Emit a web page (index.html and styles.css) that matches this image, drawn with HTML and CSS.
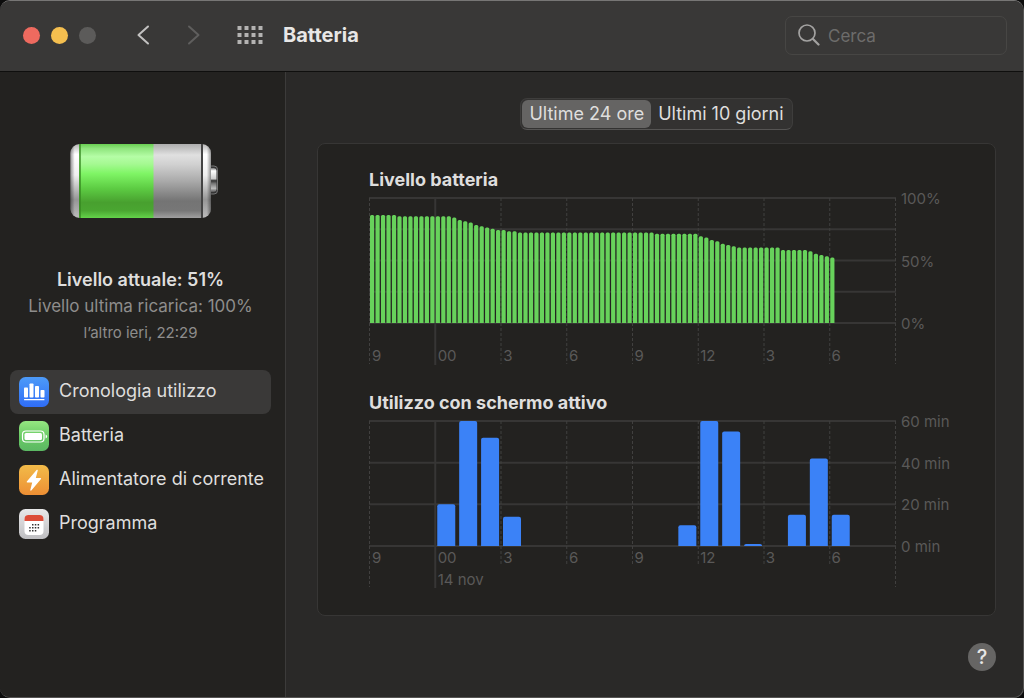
FILE: index.html
```html
<!DOCTYPE html>
<html lang="it">
<head>
<meta charset="utf-8">
<meta name="viewport" content="width=device-width, initial-scale=1">
<title>Batteria</title>
<link rel="stylesheet" href="styles.css">
</head>
<body>
<div class="window">
  <header class="toolbar">
    <div class="lights">
      <button class="light light-close" aria-label="Chiudi"></button>
      <button class="light light-min" aria-label="Riduci"></button>
      <button class="light light-zoom" aria-label="Ingrandisci" disabled></button>
    </div>
    <div class="history">
      <button class="icon-button" aria-label="Indietro">
        <svg width="14" height="22" viewBox="0 0 14 22"><path d="M12 2.500 2.500 11 12 19.500" fill="none" stroke="#c2c1c0" stroke-width="2" stroke-linecap="round" stroke-linejoin="round"/></svg>
      </button>
      <button class="icon-button" aria-label="Avanti" disabled>
        <svg width="14" height="22" viewBox="0 0 14 22"><path d="M2 2.500 11.500 11 2 19.500" fill="none" stroke="#5f5e5d" stroke-width="2" stroke-linecap="round" stroke-linejoin="round"/></svg>
      </button>
    </div>
    <button class="icon-button" aria-label="Mostra tutte">
      <svg width="26" height="18" viewBox="0 0 26 18"><path d="M0.500 2H25.500M0.500 9H25.500M0.500 16H25.500" fill="none" stroke="#b4b3b2" stroke-width="4" stroke-dasharray="4 3"/></svg>
    </button>
    <h1 class="title">Batteria</h1>
    <label class="search">
      <svg width="22" height="22" viewBox="0 0 22 22"><g fill="none" stroke="#a3a2a1" stroke-linecap="round"><circle cx="9" cy="9" r="8" stroke-width="1.700"/><path d="m15 15 5.500 5.500" stroke-width="2.200"/></g></svg>
      <input class="search-input" type="search" placeholder="Cerca" aria-label="Cerca">
    </label>
  </header>

  <div class="body">
    <aside class="sidebar">
      <svg class="battery" width="152" height="80" viewBox="0 0 152 80" role="img" aria-label="Batteria al 51%">
        <defs>
          <linearGradient id="shell" x1="0" y1="0" x2="0" y2="1"><stop offset="0" stop-color="#b5b5b5"/><stop offset=".14" stop-color="#fff"/><stop offset=".42" stop-color="#f0f0f0"/><stop offset=".75" stop-color="#969696"/><stop offset="1" stop-color="#bcbcbc"/></linearGradient>
          <linearGradient id="side" x1="0" y1="0" x2="1" y2="0"><stop offset="0" stop-color="#000" stop-opacity=".4"/><stop offset=".03" stop-color="#000" stop-opacity="0"/><stop offset=".97" stop-color="#000" stop-opacity="0"/><stop offset="1" stop-color="#000" stop-opacity=".4"/></linearGradient>
          <linearGradient id="charge" x1="0" y1="0" x2="0" y2="1"><stop offset="0" stop-color="#69cf52"/><stop offset=".06" stop-color="#8fe57d"/><stop offset=".17" stop-color="#b5fda6"/><stop offset=".27" stop-color="#a5f992"/><stop offset=".4" stop-color="#7ff565"/><stop offset=".6" stop-color="#5dcc43"/><stop offset=".79" stop-color="#48a02f"/><stop offset=".9" stop-color="#4aa631"/><stop offset="1" stop-color="#64d34a"/></linearGradient>
          <linearGradient id="empty" x1="0" y1="0" x2="0" y2="1"><stop offset="0" stop-color="#adadad"/><stop offset=".15" stop-color="#e0e0e0"/><stop offset=".28" stop-color="#d0d0d0"/><stop offset=".5" stop-color="#aaa"/><stop offset=".77" stop-color="#747474"/><stop offset=".9" stop-color="#777"/><stop offset="1" stop-color="#a0a0a0"/></linearGradient>
          <linearGradient id="cap" x1="0" y1="0" x2="0" y2="1"><stop offset="0" stop-color="#777"/><stop offset=".12" stop-color="#fff"/><stop offset=".45" stop-color="#ccc"/><stop offset=".53" stop-color="#333"/><stop offset=".65" stop-color="#777"/><stop offset=".85" stop-color="#bbb"/><stop offset="1" stop-color="#555"/></linearGradient>
        </defs>
        <rect x="138" y="25" width="9.500" height="28" rx="3.500" fill="#343434" stroke="#777" stroke-width="1"/>
        <rect x="138" y="27" width="8.500" height="24" rx="3" fill="url(#cap)"/>
        <rect x="0.500" y="3" width="140.500" height="74" rx="9" fill="url(#shell)"/>
        <rect x="0.500" y="3" width="140.500" height="74" rx="9" fill="url(#side)"/>
        <rect x="9" y="3" width="75" height="74" fill="url(#charge)"/>
        <rect x="83.500" y="3" width="47.500" height="74" fill="url(#empty)"/>
        <rect x="9" y="3" width="2" height="74" fill="#35861f" opacity=".7"/>
        <rect x="131" y="3" width="2" height="74" fill="#444"/>
      </svg>

      <div class="status">
        <p class="status-now">Livello attuale: 51%</p>
        <p class="status-last">Livello ultima ricarica: 100%</p>
        <p class="status-time">l’altro ieri, 22:29</p>
      </div>

      <nav class="nav">
        <a class="nav-item nav-item-active" href="#cronologia" aria-current="page">
          <svg width="30" height="30" viewBox="0 0 30 30"><defs><linearGradient id="blue" x1="0" y1="0" x2="0" y2="1"><stop offset="0" stop-color="#4d9bf8"/><stop offset="1" stop-color="#2f6df6"/></linearGradient></defs><rect width="30" height="30" rx="6.500" fill="url(#blue)"/><g fill="#fff"><rect x="5" y="10.500" width="4" height="10" rx=".8"/><rect x="10.500" y="6.500" width="4" height="14" rx=".8"/><rect x="16" y="9" width="4" height="11.500" rx=".8"/><rect x="21.500" y="13" width="4" height="7.500" rx=".8"/><rect x="5" y="22" width="20.500" height="1.300" rx=".6"/></g></svg>
          <span class="nav-label">Cronologia utilizzo</span>
        </a>
        <a class="nav-item" href="#batteria">
          <svg width="30" height="30" viewBox="0 0 30 30"><defs><linearGradient id="green" x1="0" y1="0" x2="0" y2="1"><stop offset="0" stop-color="#95e781"/><stop offset=".55" stop-color="#68c964"/><stop offset="1" stop-color="#5bb863"/></linearGradient></defs><rect width="30" height="30" rx="6.500" fill="url(#green)"/><rect x="3.500" y="10" width="21.500" height="11" rx="3.500" fill="none" stroke="#fff" stroke-width="1.200"/><rect x="5.500" y="12" width="17.500" height="7" rx="1.500" fill="#fff"/><path d="M26.600 13.500q1.500.6 1.500 2t-1.500 2z" fill="#fff"/></svg>
          <span class="nav-label">Batteria</span>
        </a>
        <a class="nav-item" href="#alimentatore">
          <svg width="30" height="30" viewBox="0 0 30 30"><defs><linearGradient id="orange" x1="0" y1="0" x2="0" y2="1"><stop offset="0" stop-color="#f2bb49"/><stop offset="1" stop-color="#ed8f34"/></linearGradient></defs><rect width="30" height="30" rx="6.500" fill="url(#orange)"/><path d="M17.800 4.800 7.800 16.500q-.4.900.5 1h4.900L11.300 25q.1 1 1 .4L22 14q.4-.9-.5-1h-4.700L18.800 5.300q0-1-1-.5z" fill="#fff"/></svg>
          <span class="nav-label">Alimentatore di corrente</span>
        </a>
        <a class="nav-item" href="#programma">
          <svg width="30" height="30" viewBox="0 0 30 30"><defs><linearGradient id="silver" x1="0" y1="0" x2="0" y2="1"><stop offset="0" stop-color="#e8e8e9"/><stop offset="1" stop-color="#bebec1"/></linearGradient></defs><rect width="30" height="30" rx="6.500" fill="url(#silver)"/><rect x="5.500" y="6" width="19" height="20" rx="4" fill="#fff"/><path d="M5.500 12v-2a4 4 0 0 1 4-4h11a4 4 0 0 1 4 4v2z" fill="#dc4c38"/><path d="M13 15.800h7.500M10.200 18.800h10.300M10.200 21.800h7.500" stroke="#333" stroke-width="1.500" stroke-dasharray="1.500 1.300"/></svg>
          <span class="nav-label">Programma</span>
        </a>
      </nav>
    </aside>

    <main class="content">
      <div class="segments" role="group" aria-label="Periodo">
        <button class="segment segment-active" aria-pressed="true">Ultime 24 ore</button>
        <button class="segment" aria-pressed="false">Ultimi 10 giorni</button>
      </div>

      <div class="panel">
        <section class="section">
          <h2 class="section-title">Livello batteria</h2>
          <div class="chart">
            <svg class="plot" id="level-plot" viewBox="0 0 528 170" preserveAspectRatio="none" aria-hidden="true"></svg>
            <div class="hours hours-low">
              <span>9</span><span>00</span><span>3</span><span>6</span><span>9</span><span>12</span><span>3</span><span>6</span>
            </div>
            <div class="scale"><span>100%</span><span>50%</span><span>0%</span></div>
          </div>
        </section>

        <section class="section">
          <h2 class="section-title">Utilizzo con schermo attivo</h2>
          <div class="chart">
            <svg class="plot" id="usage-plot" viewBox="0 0 528 170" preserveAspectRatio="none" aria-hidden="true"></svg>
            <div class="hours">
              <span>9</span><span>00<br>14 nov</span><span>3</span><span>6</span><span>9</span><span>12</span><span>3</span><span>6</span>
            </div>
            <div class="scale"><span>60 min</span><span>40 min</span><span>20 min</span><span>0 min</span></div>
          </div>
        </section>
      </div>

      <button class="help" aria-label="Aiuto">?</button>
    </main>
  </div>
</div>
<script src="charts.js"></script>
</body>
</html>
```
FILE: styles.css
```css
* {
  box-sizing: border-box;
}

body {
  margin: 0;
  background: #0c0c0c;
  color: #dfdedd;
  font-family: Inter, "Liberation Sans", sans-serif;
  font-size: 18px;
  line-height: 24px;
}

h1, h2, p {
  margin: 0;
}

button {
  padding: 0;
  border: 0;
  background: none;
  color: inherit;
  font: inherit;
}

svg {
  display: block;
  flex: none;
}

.window {
  display: flex;
  flex-direction: column;
  min-height: 100vh;
  overflow: hidden;
  border: 1px solid #555453;
  border-top-color: #777675;
  border-left: 0;
  border-radius: 10px;
  background: #2a2928;
}

.toolbar {
  display: flex;
  align-items: center;
  height: 71px;
  padding: 0 16px 2px 23px;
  border-bottom: 1px solid #0f0f0e;
  background: #393837;
}

.lights {
  display: flex;
  gap: 11px;
}

.light {
  width: 17px;
  height: 17px;
  border-radius: 50%;
}

.light-close { background: #ee6a5f; }
.light-min { background: #f5bf4f; }
.light-zoom { background: #5c5b5a; }

.history {
  display: flex;
  gap: 37px;
  margin: 0 36px 0 40px;
}

.title {
  flex: 1;
  margin-left: 20px;
  color: #e8e7e6;
  font-size: 20px;
  font-weight: 700;
}

.search {
  display: flex;
  align-items: center;
  gap: 8px;
  width: 222px;
  height: 39px;
  padding: 0 12px;
  border: 1px solid #474644;
  border-radius: 7px;
}

.search-input {
  flex: 1;
  min-width: 0;
  padding: 2px 0 0;
  border: 0;
  outline: 0;
  background: none;
  color: #dfdedd;
  font: inherit;
  font-size: 17px;
}

.search-input::placeholder {
  color: #6d6c6b;
  opacity: 1;
}

.body {
  display: flex;
  flex: 1;
}

.sidebar {
  flex: none;
  width: 286px;
  padding: 69px 14px 16px 10px;
  border-right: 1px solid #3c3b3a;
  background: #232220;
}

.battery {
  margin-left: 60px;
}

.status {
  margin-top: 47px;
  text-align: center;
}

.status-now {
  font-weight: 600;
}

.status-last {
  color: #8e8d8c;
  font-size: 17px;
  line-height: 28px;
}

.status-time {
  color: #8e8d8c;
  font-size: 15px;
  line-height: 26px;
}

.nav {
  display: flex;
  flex-direction: column;
  margin-top: 24px;
}

.nav-item {
  display: flex;
  align-items: center;
  gap: 10px;
  height: 44px;
  padding: 0 9px;
  border-radius: 8px;
  color: inherit;
  text-decoration: none;
  white-space: nowrap;
}

.nav-item-active {
  background: #3a3938;
}

.nav-label {
  padding-bottom: 2px;
}

.content {
  display: flex;
  flex: 1;
  flex-direction: column;
  align-items: center;
  min-width: 0;
  padding: 26px 27px 26px 31px;
}

.segments {
  display: flex;
  padding: 1px;
  border: 1px solid #3e3d3c;
  border-bottom-color: #555453;
  border-radius: 7px;
  background: #333231;
}

.segment {
  height: 28px;
  padding: 0 7px;
  border-radius: 6px;
  white-space: nowrap;
}

.segment-active {
  background: #656463;
}

.panel {
  align-self: stretch;
  margin-top: 13px;
  padding: 24px 0 24px 51px;
  border: 1px solid #373635;
  border-radius: 8px;
  background: #232220;
}

.section + .section {
  margin-top: 24px;
}

.section-title {
  font-size: 18px;
  font-weight: 700;
}

.chart {
  display: grid;
  grid-template-columns: 1fr 98px;
  margin-top: 5px;
  color: #5a5958;
  font-size: 15px;
  line-height: 22px;
}

.plot {
  grid-area: 1 / 1;
  width: 100%;
  height: 170px;
}

.hours {
  display: grid;
  grid-area: 1 / 1;
  grid-template-columns: repeat(8, 1fr);
  padding: 127px 0 0 3px;
  white-space: nowrap;
}

.hours-low {
  padding-top: 148px;
}

.scale {
  display: flex;
  grid-area: 1 / 2;
  flex-direction: column;
  justify-content: space-between;
  height: 147px;
  margin-top: -9px;
  padding-left: 4px;
}

.grid-line {
  stroke: #373635;
  stroke-width: 2;
}

.grid-dash {
  stroke: #41403f;
  stroke-width: 1;
  stroke-dasharray: 3 2;
}

.bar-level { fill: #67d25b; }
.bar-usage { fill: #3b82f7; }

.help {
  align-self: flex-end;
  width: 28px;
  height: 28px;
  margin-top: 27px;
  border-radius: 50%;
  background: #666564;
  color: #e8e7e6;
  font-size: 20px;
  font-weight: 500;
}
```
FILE: charts.js
```js
const TOP = 1;
const HEIGHT = 125;
const BASE = TOP + HEIGHT;
const WIDTH = 526;
const DAY_HOURS = 24;

// [charge percentage, number of consecutive quarter hours]
const level = [
  [86, 5], [85, 10], [84, 1], [82, 1], [81, 1], [80, 1], [78, 1], [77, 1],
  [76, 1], [75, 1], [74, 2], [73, 2], [72, 25], [71, 8], [69, 1], [68, 1],
  [66, 1], [65, 1], [63, 1], [62, 1], [61, 1], [60, 8], [58, 5], [57, 1],
  [55, 1], [54, 1], [53, 1], [52, 1]
].flatMap(([value, count]) => Array(count).fill(value));

// hour slot -> minutes with the screen on
const usage = { 3: 20, 4: 60, 5: 52, 6: 14, 14: 10, 15: 60, 16: 55, 17: 1, 19: 15, 20: 42, 21: 15 };

function add(svg, name, attributes) {
  const node = document.createElementNS("http://www.w3.org/2000/svg", name);
  for (const key in attributes) node.setAttribute(key, attributes[key]);
  svg.append(node);
}

function drawGrid(svg, rows, tickEnd, edgeEnd) {
  for (let r = 0; r <= rows; r++) {
    const y = TOP + (HEIGHT * r) / rows;
    add(svg, "line", { class: "grid-line", x1: 0, x2: WIDTH + 1, y1: y, y2: y });
  }
  for (let t = 0; t <= 8; t++) {
    const x = 0.5 + (WIDTH * t) / 8;
    const edge = t === 0 || t === 8;
    add(svg, "line", {
      class: t === 1 ? "grid-line" : "grid-dash",
      x1: x, x2: x, y1: TOP, y2: t === 1 ? 168 : edge ? edgeEnd : tickEnd
    });
  }
}

function drawBar(svg, className, x, width, height, radius) {
  const r = Math.min(radius, height);
  add(svg, "path", {
    class: className,
    d: `M${x} ${BASE}v${r - height}q0 ${-r} ${r} ${-r}h${width - 2 * r}q${r} 0 ${r} ${r}v${height - r}z`
  });
}

const levelPlot = document.getElementById("level-plot");
drawGrid(levelPlot, 4, 167, 167);
level.forEach((value, i) => {
  const slot = WIDTH / (DAY_HOURS * 4);
  drawBar(levelPlot, "bar-level", 1 + i * slot, 4.2, ((value + 0.4) * HEIGHT) / 100, 1.5);
});

const usagePlot = document.getElementById("usage-plot");
drawGrid(usagePlot, 3, 144, 167);
for (const hour in usage) {
  const slot = WIDTH / DAY_HOURS;
  drawBar(usagePlot, "bar-usage", 2.5 + hour * slot, 18, (usage[hour] * HEIGHT) / 60, 2);
}
```
